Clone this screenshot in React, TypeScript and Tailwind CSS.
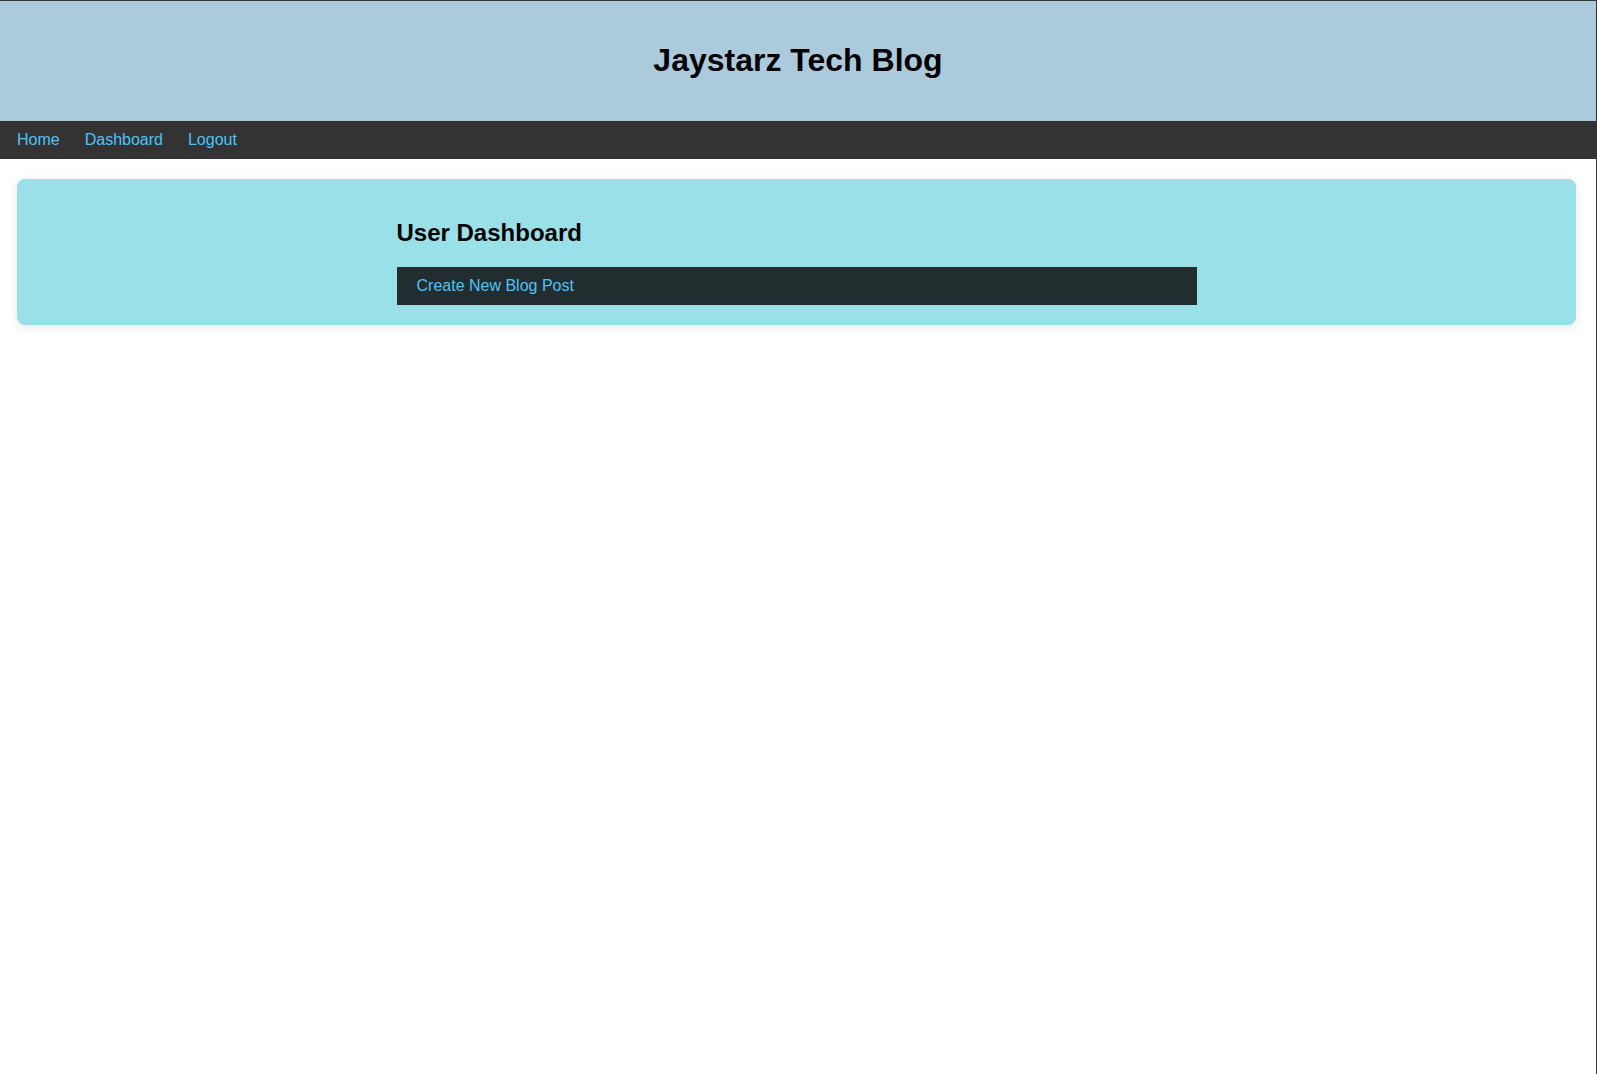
export default function App() {
  return (
    <div className="min-h-[1074px] bg-white border-t border-r border-[#333333] font-['Liberation_Sans',Arial,sans-serif]">
      <header className="h-[120px] bg-[#abcadb] flex items-center justify-center pb-[2px]">
        <h1 className="text-[32px] font-bold text-black">Jaystarz Tech Blog</h1>
      </header>
      <nav className="h-[38px] bg-[#333333] flex items-center pl-[17px] gap-[25px] text-[16px] text-[#4fc3f7]">
        <a href="#">Home</a>
        <a href="#">Dashboard</a>
        <a href="#">Logout</a>
      </nav>
      <main className="pt-[20px] pl-[17px] pr-[20px]">
        <section className="rounded-lg bg-[#9ae0e8] shadow-[0_2px_10px_rgba(0,0,0,0.1)] pt-[40px] pb-[20px]">
          <div className="w-[800px] mx-auto">
            <h2 className="text-[24px] leading-[28px] font-bold text-black mb-[20px]">User Dashboard</h2>
            <a href="#" className="h-[38px] bg-[#212d2f] flex items-center pl-[20px] text-[16px] text-[#4fc3f7]">
              Create New Blog Post
            </a>
          </div>
        </section>
      </main>
    </div>
  );
}
